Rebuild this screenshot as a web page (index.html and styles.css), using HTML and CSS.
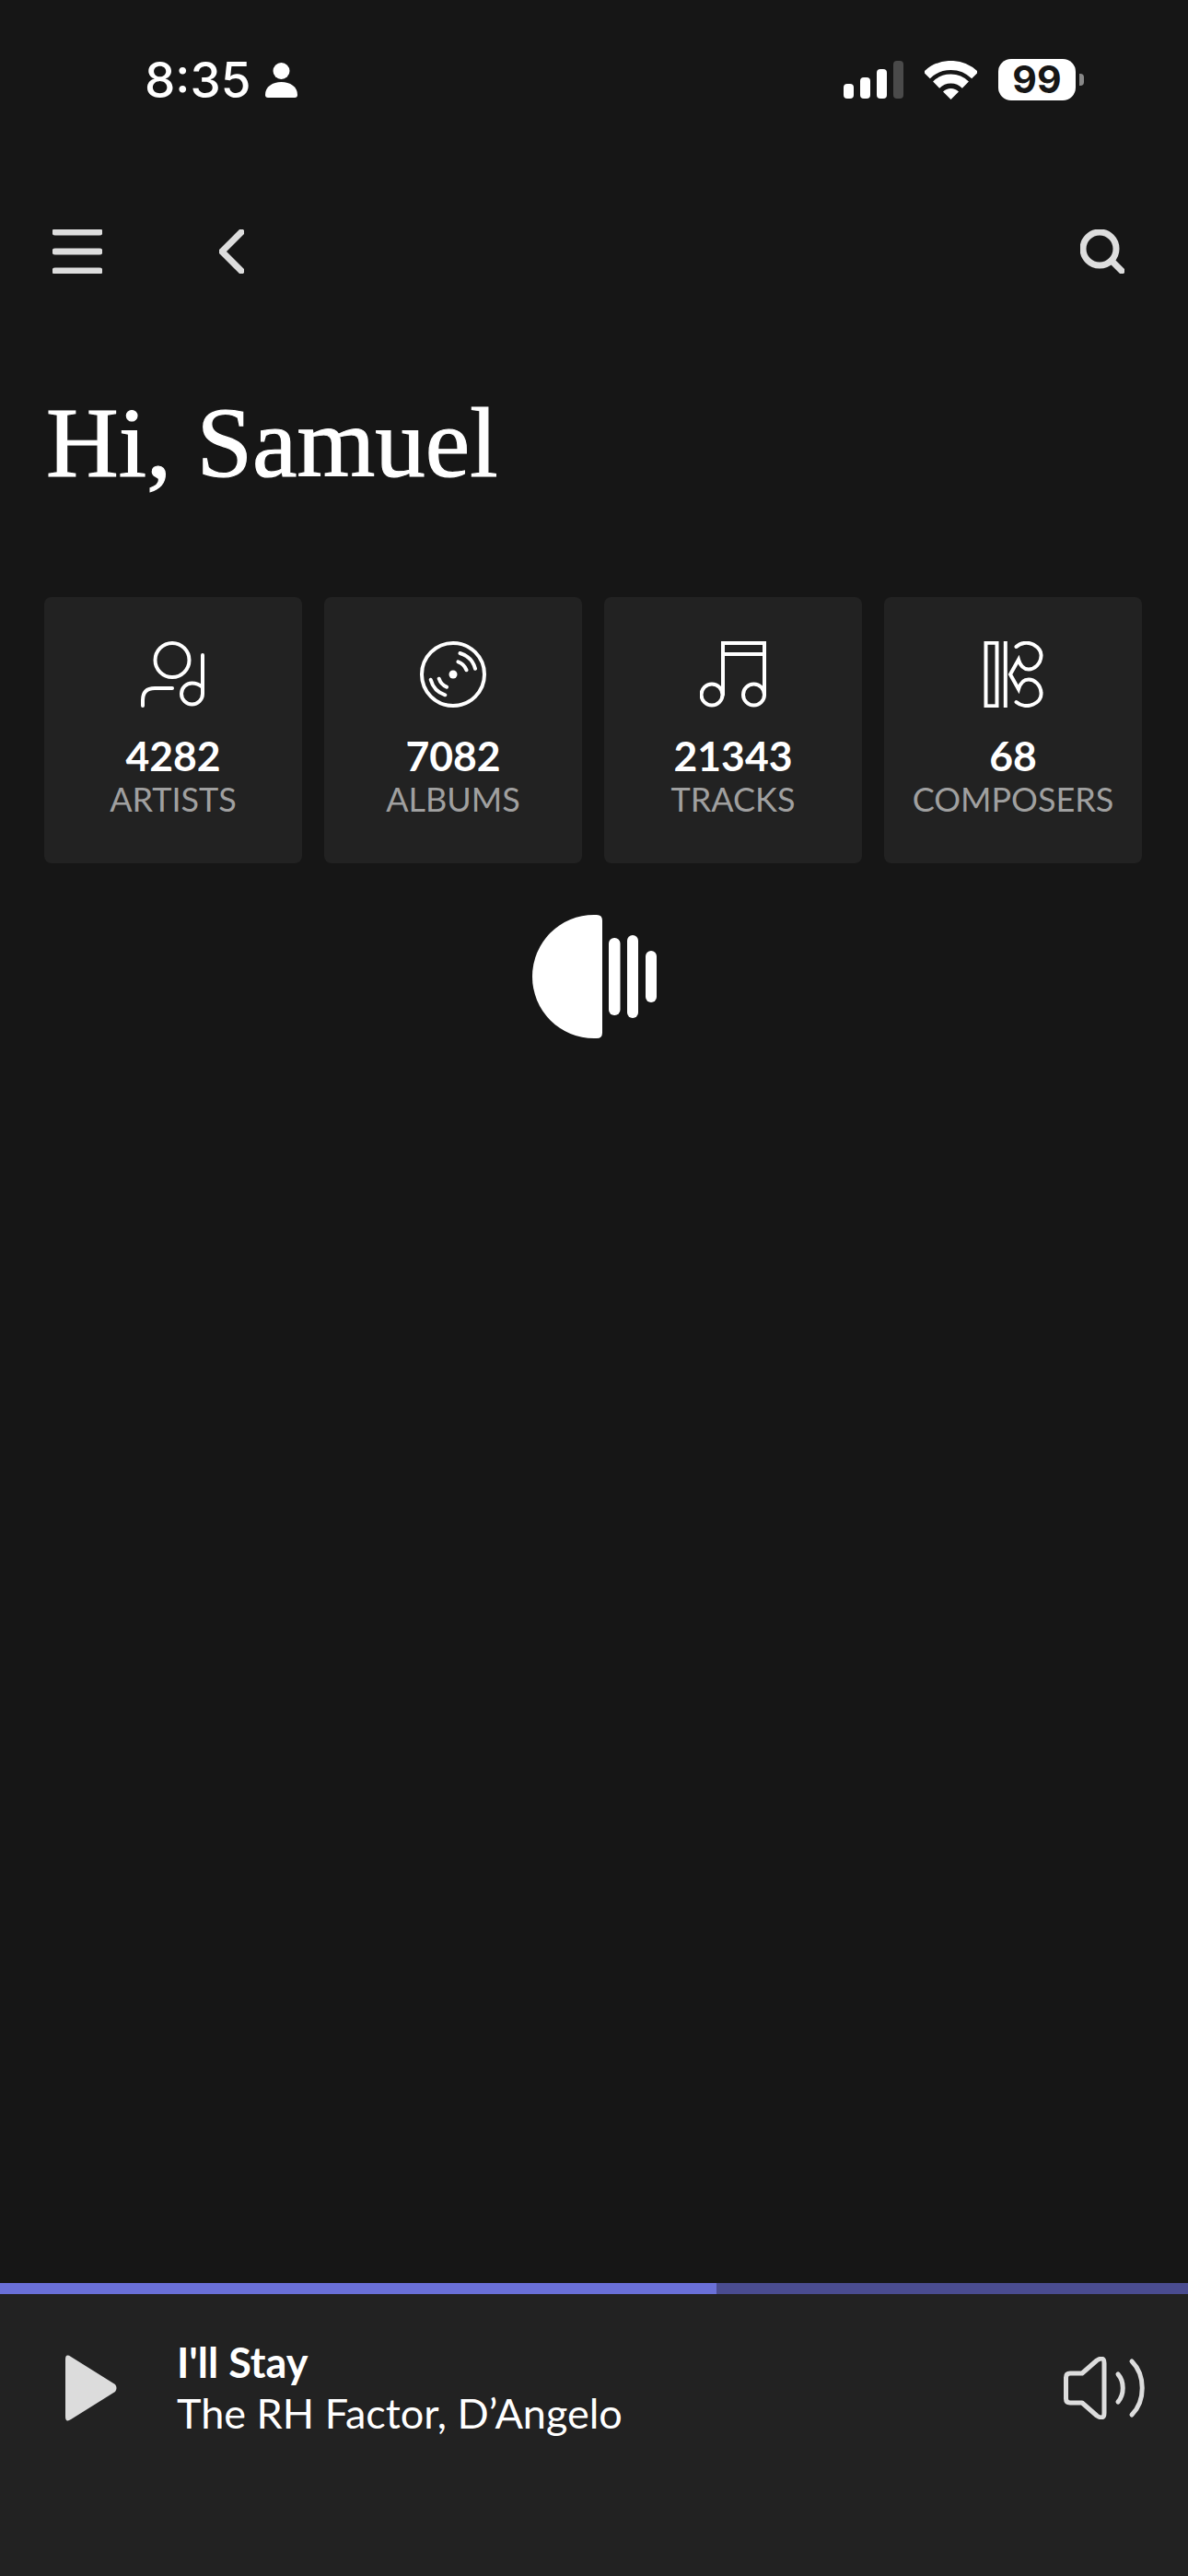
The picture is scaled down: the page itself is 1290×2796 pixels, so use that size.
FILE: index.html
```html
<!DOCTYPE html>
<html>
<head>
	<meta charset="utf-8">
	<title>Hi, Samuel</title>
	<link rel="stylesheet" href="styles.css">
</head>
<body>
	<div class="app">
		<!-- status bar -->
		<div class="status">
			<div class="clock">
				<span class="time">8:35</span>
				<svg class="person" width="35" height="38" viewBox="0 0 35 38"><circle cx="17.5" cy="9" r="9"/><path d="M3 38Q0 38 0 35C0 26 8 21 17.5 21C27 21 35 26 35 35Q35 38 32 38Z"/></svg>
			</div>
			<div class="indicators">
				<div class="signal"><i class="b1"></i><i class="b2"></i><i class="b3"></i><i class="b4"></i></div>
				<svg class="wifi" width="57" height="42" viewBox="0 0 57 42"><path d="M2.3 15.8A37 37 0 0 1 54.7 15.8" /><path d="M12.6 26.1A22.5 22.5 0 0 1 44.4 26.1" /><path class="wedge" d="M28.5 42L20 33.5A12 12 0 0 1 37 33.5Z"/></svg>
				<div class="battery"><span class="level">99</span><i class="nub"></i></div>
			</div>
		</div>

		<!-- top nav -->
		<div class="nav">
			<div class="nav-left">
				<svg width="54" height="48" viewBox="0 0 54 48" class="nav-icon"><path d="M3 3H51M3 24H51M3 45H51"/></svg>
				<svg width="27" height="48" viewBox="0 0 27 48" class="nav-icon"><path d="M24 3L3 24L24 45"/></svg>
			</div>
			<svg width="48" height="48" viewBox="0 0 48 48" class="nav-icon"><circle cx="21" cy="21" r="18"/><path d="M34 34L45 45"/></svg>
		</div>

		<h1 class="hello">Hi, Samuel</h1>

		<!-- library counts -->
		<div class="stats">
			<div class="card">
				<svg width="72" height="72" viewBox="0 0 72 72" class="card-icon"><circle cx="35" cy="20.5" r="18.5"/><path d="M35 51H16Q3 51 3 64V70"/><path d="M68 15V57A11.5 11.5 0 1 1 56.5 45.500C60 45.500 64 46.500 68 50"/></svg>
				<div class="count">4282</div>
				<div class="label">ARTISTS</div>
			</div>
			<div class="card">
				<svg width="72" height="72" viewBox="0 0 72 72" class="card-icon"><circle cx="36" cy="36" r="34"/><circle class="solid" cx="36" cy="36" r="4.500"/><path d="M41.500 22.300A15 15 0 0 1 50.500 31.300M43.500 13A24 24 0 0 1 60 29.700M20.700 40.700A15 15 0 0 0 29 49.700M11.700 41.700A24 24 0 0 0 27.300 58.300"/></svg>
				<div class="count">7082</div>
				<div class="label">ALBUMS</div>
			</div>
			<div class="card">
				<svg width="72" height="72" viewBox="0 0 72 72" class="card-icon"><path d="M25 58V2H70V58M25 14H70"/><circle cx="13" cy="58" r="11.500"/><circle cx="58.500" cy="58" r="11.500"/></svg>
				<div class="count">21343</div>
				<div class="label">TRACKS</div>
			</div>
			<div class="card">
				<svg width="72" height="72" viewBox="0 0 72 72" class="card-icon"><rect x="6.500" y="1.800" width="12" height="68.500"/><path d="M27.800 0V72"/><path d="M39.500 6C44 1.500 52 .5 58 3.500C64 7 67 11 66.500 16C66 25 59 30.500 53 30.500C48 30.500 44 27 42 20L33 36L42 52C44 45 48 41.500 53 41.500C59 41.500 66 47 66.500 56C67 61 64 66 58 68.500C52 71.500 44 70 39.500 66"/></svg>
				<div class="count">68</div>
				<div class="label">COMPOSERS</div>
			</div>
		</div>

		<!-- loading mark -->
		<svg class="loader" width="135" height="134" viewBox="0 0 135 134">
			<path d="M67 0H70Q76 0 76 6V128Q76 134 70 134H67A67 67 0 0 1 67 0Z"/>
			<rect x="83" y="25" width="12.500" height="84" rx="6"/>
			<rect x="103" y="22" width="12" height="90" rx="6"/>
			<rect x="123" y="39" width="12" height="56" rx="6"/>
		</svg>

		<div class="spacer"></div>

		<!-- now playing -->
		<div class="progress"><div class="progress-fill"></div></div>
		<div class="player">
			<div class="player-row">
				<svg class="play" width="57" height="72" viewBox="0 0 57 72"><path d="M0 5Q0 -2 6 2L54 32Q57 36 54 40L6 70Q0 74 0 67Z"/></svg>
				<div class="track">
					<div class="track-title">I'll Stay</div>
					<div class="track-artist">The RH Factor, D’Angelo</div>
				</div>
				<svg class="volume" width="88" height="68" viewBox="0 0 88 68"><path d="M7 18H20L36 4Q44 -1 44 7V61Q44 69 36 64L20 50H7Q2.500 50 2.500 45.500V22.500Q2.500 18 7 18Z"/><path d="M59 19C66 27 66 41 59 49"/><path d="M74 5C89 20 89 48 74 63"/></svg>
			</div>
		</div>
	</div>
</body>
</html>
```

FILE: styles.css
```css
* {
	padding: 0;
	margin: 0;
	box-sizing: border-box;
}
body {
	background: #161616;
	font-family: "Lato", "Liberation Sans", sans-serif;
	color: #fff;
}
.app {
	height: 2796px;
	display: flex;
	flex-direction: column;
	overflow: hidden;
}

/* status bar */
.status {
	height: 173px;
	padding: 0 122px 0 157px;
	display: flex;
	align-items: center;
	justify-content: space-between;
}
.clock {
	display: flex;
	align-items: center;
	gap: 16px;
}
.time {
	font-family: "Inter", sans-serif;
	font-size: 53px;
	font-weight: 500;
	line-height: 60px;
}
.person {
	fill: #fff;
}
.indicators {
	display: flex;
	align-items: center;
	gap: 23px;
}
.signal {
	display: flex;
	align-items: flex-end;
	gap: 7px;
	height: 41px;
}
.signal i {
	width: 11px;
	border-radius: 4px;
	background: #fff;
}
.signal .b1 { height: 16px; }
.signal .b2 { height: 23px; }
.signal .b3 { height: 32px; }
.signal .b4 { height: 41px; background: #4a4a4a; }
.wifi path {
	fill: none;
	stroke: #fff;
	stroke-width: 10;
}
.wifi .wedge {
	fill: #fff;
	stroke: none;
}
.battery {
	position: relative;
	width: 84px;
	height: 45px;
	border-radius: 14px;
	background: #fff;
	text-align: center;
}
.level {
	font-family: "Inter", sans-serif;
	font-size: 41px;
	font-weight: 700;
	line-height: 45px;
	color: #161616;
}
.nub {
	position: absolute;
	left: 88px;
	top: 16px;
	width: 5px;
	height: 13px;
	border-radius: 0 4px 4px 0;
	background: #888;
}

/* top nav */
.nav {
	margin-top: 76px;
	padding: 0 69px 0 57px;
	display: flex;
	justify-content: space-between;
}
.nav-left {
	display: flex;
	gap: 127px;
}
.nav-icon {
	fill: none;
	stroke: #ddd;
	stroke-width: 7;
	stroke-linecap: round;
	stroke-linejoin: round;
}

.hello {
	margin: 124px 0 0 50px;
	font-family: "Liberation Serif", serif;
	font-size: 109px;
	font-weight: 400;
	line-height: 120px;
	-webkit-text-stroke: 1.2px #fff;
}

/* library counts */
.stats {
	margin-top: 107px;
	padding: 0 48px;
	display: grid;
	grid-template-columns: repeat(4, 280px);
	gap: 24px;
}
.card {
	height: 289px;
	padding-top: 48px;
	border-radius: 8px;
	background: #222;
	text-align: center;
}
.card-icon {
	display: block;
	margin: 0 auto;
	fill: none;
	stroke: #fff;
	stroke-width: 4;
	stroke-linecap: round;
}
.card-icon .solid {
	fill: #fff;
	stroke: none;
}
.count {
	margin-top: 28px;
	font-size: 44.500px;
	font-weight: 700;
	line-height: 48px;
}
.label {
	font-size: 36px;
	line-height: 46px;
	color: #a0a0a0;
}

.loader {
	display: block;
	margin: 56px 0 0 578px;
	fill: #fff;
}
.spacer {
	flex: 1;
}

/* now playing */
.progress {
	height: 12px;
	background: #4a4c90;
}
.progress-fill {
	width: 778px;
	height: 100%;
	background: #6a70d8;
}
.player {
	height: 306px;
	padding: 47px 47px 0 71px;
	background: #222;
}
.player-row {
	height: 110px;
	display: flex;
	align-items: center;
	gap: 64px;
}
.play {
	fill: #dcdcdc;
}
.track {
	flex: 1;
	font-size: 45px;
	line-height: 55px;
}
.track-title {
	font-weight: 700;
}
.volume {
	fill: none;
	stroke: #ddd;
	stroke-width: 5;
	stroke-linecap: round;
	stroke-linejoin: round;
}
```
